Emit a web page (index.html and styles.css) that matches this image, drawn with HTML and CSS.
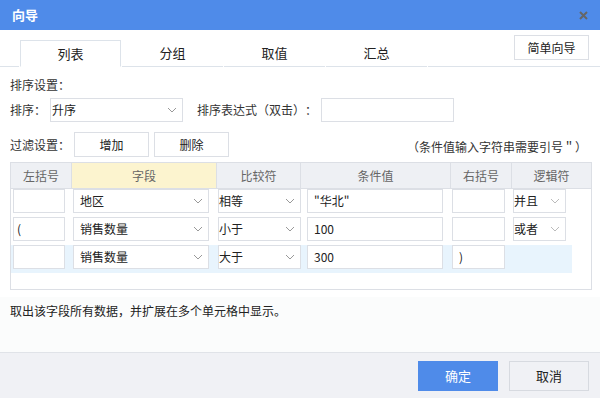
FILE: index.html
```html
<!DOCTYPE html>
<html lang="zh-CN">
  <head>
    <meta charset="UTF-8" />
    <title>向导</title>
    <link rel="stylesheet" href="styles.css">
  </head>
  <body>
    <div class="dialog">
      <div class="titlebar">
        <span class="title">向导</span>
        <svg class="close" width="9" height="9" viewBox="0 0 9 9">
          <path d="M1 1L8 8M8 1L1 8" stroke="#666" stroke-width="2" />
        </svg>
      </div>

      <div class="tabbar">
        <div class="tab-lead"></div>
        <div class="tab active">列表</div>
        <div class="tab">分组</div>
        <div class="tab">取值</div>
        <div class="tab">汇总</div>
        <div class="tab-fill">
          <button class="btn simple-btn">简单向导</button>
        </div>
      </div>

      <div class="section">
        <div class="label-line">排序设置：</div>
        <div class="sort-row">
          <span class="label">排序：</span>
          <div class="select sort-select">
            <span class="plain">升序</span>
            <svg width="10" height="6" viewBox="0 0 10 6"><path d="M1 1l4 4 4-4" fill="none" stroke="#999" /></svg>
          </div>
          <span class="label expr-label">排序表达式（双击）：</span>
          <div class="input expr-input"></div>
        </div>
        <div class="filter-row">
          <span class="label">过滤设置：</span>
          <button class="btn small-btn">增加</button>
          <button class="btn small-btn">删除</button>
          <span class="note">（条件值输入字符串需要引号＂）</span>
        </div>

        <div class="grid">
          <div class="grid-head">
            <div class="th">左括号</div>
            <div class="th th-field">字段</div>
            <div class="th">比较符</div>
            <div class="th">条件值</div>
            <div class="th">右括号</div>
            <div class="th">逻辑符</div>
          </div>

          <div class="grid-row">
            <div class="cell c1"><div class="input w52"></div></div>
            <div class="cell c2"><div class="select w136"><span>地区</span><svg width="10" height="6" viewBox="0 0 10 6"><path d="M1 1l4 4 4-4" fill="none" stroke="#999" /></svg></div></div>
            <div class="cell c3"><div class="select tight w83"><span>相等</span><svg width="10" height="6" viewBox="0 0 10 6"><path d="M1 1l4 4 4-4" fill="none" stroke="#999" /></svg></div></div>
            <div class="cell c4"><div class="input w136">"华北"</div></div>
            <div class="cell c5"><div class="input w53"></div></div>
            <div class="cell c6"><div class="select tight w53"><span>并且</span><svg width="10" height="6" viewBox="0 0 10 6"><path d="M1 1l4 4 4-4" fill="none" stroke="#bbb" /></svg></div></div>
          </div>

          <div class="grid-row">
            <div class="cell c1"><div class="input w52">(</div></div>
            <div class="cell c2"><div class="select w136"><span>销售数量</span><svg width="10" height="6" viewBox="0 0 10 6"><path d="M1 1l4 4 4-4" fill="none" stroke="#999" /></svg></div></div>
            <div class="cell c3"><div class="select tight w83"><span>小于</span><svg width="10" height="6" viewBox="0 0 10 6"><path d="M1 1l4 4 4-4" fill="none" stroke="#999" /></svg></div></div>
            <div class="cell c4"><div class="input w136">100</div></div>
            <div class="cell c5"><div class="input w53"></div></div>
            <div class="cell c6"><div class="select tight w53"><span>或者</span><svg width="10" height="6" viewBox="0 0 10 6"><path d="M1 1l4 4 4-4" fill="none" stroke="#bbb" /></svg></div></div>
          </div>

          <div class="grid-row selected">
            <div class="cell c1"><div class="input w52"></div></div>
            <div class="cell c2"><div class="select w136"><span>销售数量</span><svg width="10" height="6" viewBox="0 0 10 6"><path d="M1 1l4 4 4-4" fill="none" stroke="#999" /></svg></div></div>
            <div class="cell c3"><div class="select tight w83"><span>大于</span><svg width="10" height="6" viewBox="0 0 10 6"><path d="M1 1l4 4 4-4" fill="none" stroke="#999" /></svg></div></div>
            <div class="cell c4"><div class="input w136">300</div></div>
            <div class="cell c5"><div class="input w53">)</div></div>
            <div class="cell c6"></div>
          </div>
        </div>
      </div>

      <div class="desc">取出该字段所有数据，并扩展在多个单元格中显示。</div>

      <div class="footer">
        <button class="btn primary">确定</button>
        <button class="btn cancel">取消</button>
      </div>
    </div>
  </body>
</html>
```

FILE: styles.css
```css
* {
  margin: 0;
  padding: 0;
  box-sizing: border-box;
  font-family: "Microsoft YaHei", "Noto Sans CJK SC", sans-serif;
  text-spacing-trim: space-all;
}

body {
  width: 600px;
  height: 398px;
  overflow: hidden;
  background: #fff;
  color: #333;
  font-size: 12px;
}

.dialog {
  width: 600px;
  height: 398px;
  display: flex;
  flex-direction: column;
}

.titlebar {
  height: 30px;
  flex-shrink: 0;
  background-color: #4f8be9;
  display: flex;
  align-items: center;
  justify-content: space-between;
  padding: 0 12px 0 12px;
}

.title {
  color: #fff;
  font-size: 13px;
  font-weight: bold;
  line-height: 16px;
}

/* tabs */
.tabbar {
  height: 37px;
  flex-shrink: 0;
  display: flex;
  align-items: flex-end;
  gap: 1px;
}

.tab-lead {
  width: 19px;
  height: 1px;
  background: #dde3ea;
}

.tab {
  width: 101px;
  height: 27px;
  border-bottom: 1px solid #dde3ea;
  display: flex;
  align-items: center;
  justify-content: center;
  font-size: 13px;
  color: #222;
  padding-bottom: 1px;
}

.tab.active {
  border: 1px solid #dde3ea;
  border-bottom-color: #fff;
}

.tab-fill {
  flex: 1;
  height: 37px;
  border-bottom: 1px solid #dde3ea;
  display: flex;
  justify-content: flex-end;
  align-items: flex-start;
  padding: 5px 11px 0 0;
}

.btn {
  background: #fff;
  border: 1px solid #dcdfe5;
  color: #222;
  font-size: 12px;
  line-height: 16px;
}

.simple-btn {
  width: 75px;
  height: 25px;
}

/* form */
.section {
  padding: 0 9px 0 10px;
}

.label-line {
  height: 20px;
  line-height: 20px;
  margin-top: 8px;
}

.sort-row {
  display: flex;
  align-items: center;
  height: 24px;
  margin-top: 3px;
}

.label {
  line-height: 16px;
  white-space: nowrap;
}

.sort-select {
  width: 133px;
  margin-left: 4px;
}

.expr-label {
  margin-left: 14px;
}

.expr-input {
  width: 133px;
  margin-left: 4px;
}

.filter-row {
  display: flex;
  align-items: center;
  height: 25px;
  margin-top: 10px;
}

.small-btn {
  width: 75px;
  height: 25px;
  margin-left: 4px;
}

.small-btn + .small-btn {
  margin-left: 5px;
}

.note {
  margin-left: auto;
  margin-right: 4px;
  margin-top: 4px;
  line-height: 16px;
}

.input,
.select {
  height: 24px;
  border: 1px solid #dcdfe5;
  background: #fff;
  display: flex;
  align-items: center;
  padding: 0 6px;
  line-height: 16px;
  white-space: nowrap;
  color: #222;
}

.select {
  justify-content: space-between;
  padding-right: 5px;
}

.select.tight {
  padding-left: 0;
}

.select.sort-select {
  padding-left: 1px;
}

/* grid */
.grid {
  width: 582px;
  height: 128px;
  margin-top: 5px;
  border: 1px solid #dcdfe5;
}

.grid-head {
  display: grid;
  grid-template-columns: 61px 145px 84px 150px 61px 1fr;
  height: 26px;
  border-bottom: 1px solid #dcdfe5;
  background: #eef0f4;
}

.th {
  display: flex;
  align-items: center;
  justify-content: center;
  color: #666;
  border-right: 1px solid #dcdfe5;
  line-height: 16px;
}

.th:last-child {
  border-right: none;
}

.th-field {
  background: #fcf4cf;
}

.grid-row {
  display: grid;
  grid-template-columns: 61px 145px 84px 150px 61px 60px;
  width: 561px;
  height: 28px;
}

.grid-row.selected {
  background: #e8f4fd;
}

.cell {
  display: flex;
  align-items: flex-start;
}

.c1 { padding-left: 2px; }
.c2 { padding-left: 1px; }
.c3 { padding-left: 1px; }
.c4 { padding-left: 6px; }
.c5 { padding-left: 1px; }
.c6 { padding-left: 1px; }

.w52 { width: 52px; padding-left: 3px; }
.w53 { width: 53px; }
.w83 { width: 83px; }
.w136 { width: 136px; }

.desc {
  flex: 1;
  margin-top: 7px;
  padding: 5px 10px 0;
  background: #fbfcfc;
  line-height: 18px;
  color: #222;
}

/* footer */
.footer {
  height: 46px;
  flex-shrink: 0;
  border-top: 1px solid #e0e3e8;
  background: #f0f1f5;
  display: flex;
  justify-content: flex-end;
  align-items: flex-start;
  gap: 11px;
  padding: 8px 11px 0 0;
}

.footer .btn {
  width: 80px;
  height: 30px;
  font-size: 13px;
}

.primary {
  background: #4f8be9;
  border-color: #4f8be9;
  color: #fff;
}

.cancel {
  background: #f0f1f5;
  border-color: #d7dae0;
}
```
